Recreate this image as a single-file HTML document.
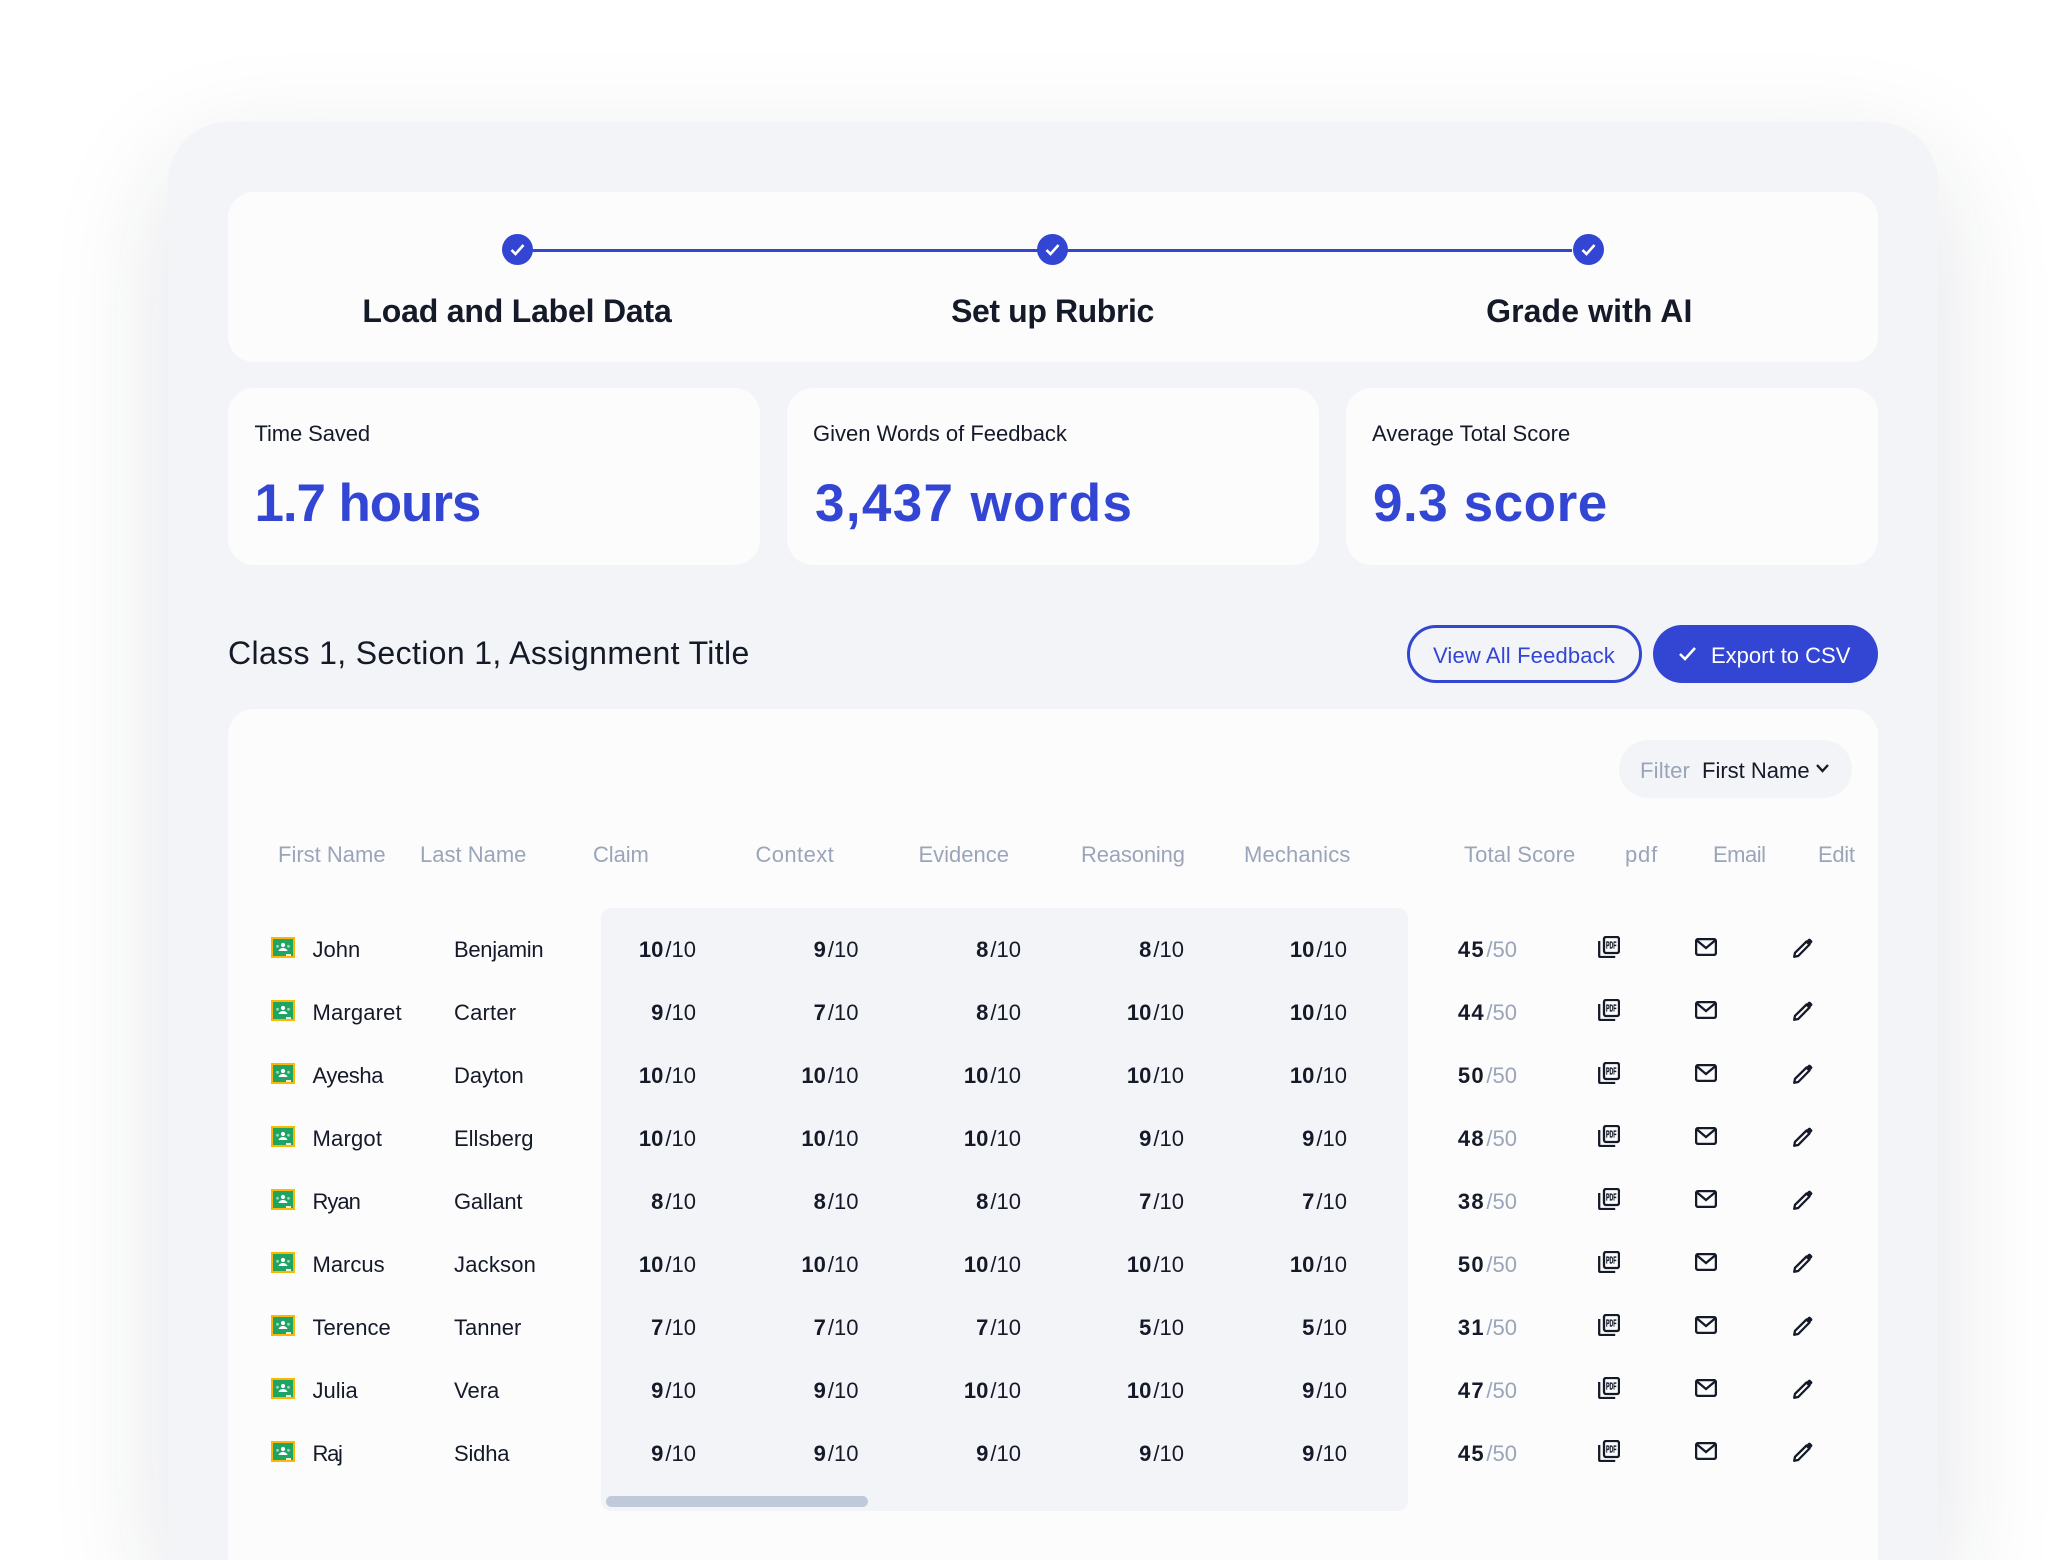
<!DOCTYPE html>
<html lang="en">
<head>
<meta charset="utf-8">
<title>Grade with AI</title>
<style>
html,body{margin:0;padding:0;background:#fff;width:2058px;height:1560px;overflow:hidden}
#page{width:2058px;height:1560px;position:relative;overflow:hidden;font-family:"Liberation Sans",sans-serif;color:#151a29;font-size:22px;background:#fff}
.abs,.panel,.card,.t,.row,.row>*{position:absolute}
.t{white-space:nowrap;line-height:30px}
.panel{left:168px;top:122px;width:1770px;height:1438px;background:#f3f4f8;border-radius:60px 60px 0 0;box-shadow:0 40px 120px rgba(30,40,70,.13)}
.card{background:#fcfcfd;border-radius:26px}
.blue{color:#3346d3}
.step{width:500px;margin-left:-250px;text-align:center;font-weight:700;font-size:32px;letter-spacing:-.2px;top:296px}
.dot{position:absolute;top:234px;width:31px;height:31px;margin-left:-15.5px}
.label{top:419px}
.val{top:473px;line-height:62px;font-size:53px;font-weight:700;letter-spacing:-1px;color:#3346d3}
.btn{position:absolute;top:624.5px;height:58px;border-radius:29px;box-sizing:border-box}
.h{top:840px;color:#9aa5b9}
.row{left:0;top:0;width:2058px;height:63px;line-height:63px}
.row>*{white-space:nowrap}
.fn{left:312.5px}
.ln{left:454px}
.s{width:120px;text-align:right}
.s b{font-weight:700;margin-right:2px}
.s1{left:576px}.s2{left:738.5px}.s3{left:901px}.s4{left:1064px}.s5{left:1227px}
.tot{left:1397px;width:120px;text-align:right}
.tot b{font-weight:700;letter-spacing:1.3px;margin-right:1.5px}
.tot span{color:#9aa5b9}
.ic{left:271px;top:19px;width:24px;height:21px}
.ip{left:1598px;top:18px;width:22px;height:22px}
.im{left:1695px;top:20px;width:22px;height:18px}
.ie{left:1793px;top:20px;width:20px;height:20px}
.ptx{font-size:10px;font-weight:700;fill:#151a29;stroke:#151a29;stroke-width:.3;font-family:"Liberation Sans",sans-serif}
</style>
</head>
<body>
<div id="page">
<svg width="0" height="0" style="position:absolute">
<defs>
<symbol id="cr" viewBox="0 0 24 21">
<rect x="1" y="1" width="22" height="19" fill="#1fa463" stroke="#fbb800" stroke-width="2"/>
<circle cx="12" cy="8" r="2.1" fill="#fff"/>
<circle cx="6.5" cy="9.3" r="1.4" fill="#9fd8ba"/>
<circle cx="17.5" cy="9.3" r="1.4" fill="#9fd8ba"/>
<path d="M7.5 14c.6-2 2.6-3 4.5-3s3.900 1 4.500 3z" fill="#fff"/>
<rect x="15" y="17" width="5" height="2" fill="#e9efe9"/>
</symbol>
<symbol id="pf" viewBox="0 0 22 22">
<rect x="6" y="1" width="15" height="16" rx="2" fill="none" stroke="#151a29" stroke-width="2.300"/>
<path d="M1.200 5v15a1 1 0 0 0 1 1h15" fill="none" stroke="#151a29" stroke-width="2.300"/>
</symbol>
<symbol id="ml" viewBox="0 0 22 18">
<rect x="1.100" y="1.100" width="19.800" height="15.800" rx="2" fill="none" stroke="#151a29" stroke-width="2.300"/>
<path d="M2 2.500l9 7.500 9-7.500" fill="none" stroke="#151a29" stroke-width="2.300"/>
</symbol>
<symbol id="pn" viewBox="0 0 20 20">
<path d="M1.200 18.800l.8-4L13.500 3.500 16.500 6.500 5.200 18z" fill="none" stroke="#151a29" stroke-width="2.300" stroke-linejoin="round"/>
<path d="M13.500 2.900l1.800-1.800a1.600 1.600 0 0 1 2.200 0l1.400 1.400a1.600 1.600 0 0 1 0 2.200L17.100 6.500z" fill="#151a29"/>
</symbol>
</defs>
</svg>

<div class="panel"></div>

<div class="card" style="left:228px;top:192px;width:1650px;height:170px"></div>
<div class="abs" style="left:532px;top:249px;width:1040px;height:3px;background:#3346d3"></div>
<svg class="dot" style="left:517px" viewBox="0 0 31 31"><circle cx="15.500" cy="15.500" r="15.500" fill="#3346d3"/><path d="M9.500 16l4 4 8-9" fill="none" stroke="#fff" stroke-width="2.600"/></svg>
<svg class="dot" style="left:1052.500px" viewBox="0 0 31 31"><circle cx="15.500" cy="15.500" r="15.500" fill="#3346d3"/><path d="M9.500 16l4 4 8-9" fill="none" stroke="#fff" stroke-width="2.600"/></svg>
<svg class="dot" style="left:1588px" viewBox="0 0 31 31"><circle cx="15.500" cy="15.500" r="15.500" fill="#3346d3"/><path d="M9.500 16l4 4 8-9" fill="none" stroke="#fff" stroke-width="2.600"/></svg>
<div class="t step" style="left:517px">Load and Label Data</div>
<div class="t step" style="left:1052.500px;letter-spacing:-.4px">Set up Rubric</div>
<div class="t step" style="left:1589.300px;letter-spacing:.1px">Grade with AI</div>

<div class="card" style="left:228px;top:388px;width:532px;height:177px"></div>
<div class="card" style="left:787px;top:388px;width:532px;height:177px"></div>
<div class="card" style="left:1346px;top:388px;width:532px;height:177px"></div>
<div class="t label" style="left:254.500px;letter-spacing:-.1px">Time Saved</div>
<div class="t label" style="left:813px">Given Words of Feedback</div>
<div class="t label" style="left:1372px;letter-spacing:.05px">Average Total Score</div>
<div class="t val" style="left:254.500px;letter-spacing:-1.1px">1.7 hours</div>
<div class="t val" style="left:815px;letter-spacing:1.350px">3,437 words</div>
<div class="t val" style="left:1373px;letter-spacing:.55px">9.3 score</div>

<div class="t" style="left:228px;top:633px;font-size:32px;line-height:40px;letter-spacing:.36px">Class 1, Section 1, Assignment Title</div>
<div class="btn" style="left:1407px;width:235px;border:3px solid #3346d3"></div>
<div class="t blue" style="left:1433px;top:641px;font-size:22px;letter-spacing:.15px">View All Feedback</div>
<div class="btn" style="left:1653px;width:225px;background:#3346d3"></div>
<svg class="abs" style="left:1678px;top:646px" width="19" height="15" viewBox="0 0 19 15"><path d="M2 8l5 5L17 2" fill="none" stroke="#fff" stroke-width="2.600"/></svg>
<div class="t" style="left:1711px;top:641px;color:#fff">Export to CSV</div>

<div class="card" style="left:228px;top:709px;width:1650px;height:851px;border-radius:26px 26px 0 0"></div>
<div class="abs" style="left:1619px;top:740px;width:233px;height:58px;border-radius:29px;background:#f3f4f8"></div>
<div class="t" style="left:1640px;top:756px;color:#9aa5b9;letter-spacing:.2px">Filter</div>
<div class="t" style="left:1702px;top:756px">First Name</div>
<svg class="abs" style="left:1815px;top:763px" width="15" height="11" viewBox="0 0 15 11"><path d="M2 2l5.500 6L13 2" fill="none" stroke="#151a29" stroke-width="2.400"/></svg>

<div class="t h" style="left:278px">First Name</div>
<div class="t h" style="left:420px">Last Name</div>
<div class="t h" style="left:593px;letter-spacing:-.1px">Claim</div>
<div class="t h" style="left:755.500px;letter-spacing:.4px">Context</div>
<div class="t h" style="left:918.500px">Evidence</div>
<div class="t h" style="left:1081px;letter-spacing:-.15px">Reasoning</div>
<div class="t h" style="left:1244px;letter-spacing:.15px">Mechanics</div>
<div class="t h" style="left:1464px;letter-spacing:.12px">Total Score</div>
<div class="t h" style="left:1625px;letter-spacing:.8px">pdf</div>
<div class="t h" style="left:1713px;letter-spacing:-.5px">Email</div>
<div class="t h" style="left:1818px;letter-spacing:-.3px">Edit</div>

<div class="abs" style="left:601px;top:908px;width:807px;height:603px;background:#f3f4f8;border-radius:10px"></div>
<div class="abs" style="left:606px;top:1496px;width:262px;height:11px;background:#bfc9da;border-radius:6px"></div>

<div class="row" style="top:918px"><svg class="ic"><use href="#cr"/></svg><span class="fn">John</span><span class="ln" style="letter-spacing:-.3px">Benjamin</span><span class="s s1"><b>10</b>/10</span><span class="s s2"><b>9</b>/10</span><span class="s s3"><b>8</b>/10</span><span class="s s4"><b>8</b>/10</span><span class="s s5"><b>10</b>/10</span><span class="tot"><b>45</b><span>/50</span></span><svg class="ip" viewBox="0 0 22 22"><use href="#pf"/><text class="ptx" x="8" y="12.500" textLength="10.500" lengthAdjust="spacingAndGlyphs">PDF</text></svg><svg class="im"><use href="#ml"/></svg><svg class="ie"><use href="#pn"/></svg></div>
<div class="row" style="top:981px"><svg class="ic"><use href="#cr"/></svg><span class="fn" style="letter-spacing:.15px">Margaret</span><span class="ln" style="letter-spacing:.2px">Carter</span><span class="s s1"><b>9</b>/10</span><span class="s s2"><b>7</b>/10</span><span class="s s3"><b>8</b>/10</span><span class="s s4"><b>10</b>/10</span><span class="s s5"><b>10</b>/10</span><span class="tot"><b>44</b><span>/50</span></span><svg class="ip" viewBox="0 0 22 22"><use href="#pf"/><text class="ptx" x="8" y="12.500" textLength="10.500" lengthAdjust="spacingAndGlyphs">PDF</text></svg><svg class="im"><use href="#ml"/></svg><svg class="ie"><use href="#pn"/></svg></div>
<div class="row" style="top:1044px"><svg class="ic"><use href="#cr"/></svg><span class="fn" style="letter-spacing:-.4px">Ayesha</span><span class="ln">Dayton</span><span class="s s1"><b>10</b>/10</span><span class="s s2"><b>10</b>/10</span><span class="s s3"><b>10</b>/10</span><span class="s s4"><b>10</b>/10</span><span class="s s5"><b>10</b>/10</span><span class="tot"><b>50</b><span>/50</span></span><svg class="ip" viewBox="0 0 22 22"><use href="#pf"/><text class="ptx" x="8" y="12.500" textLength="10.500" lengthAdjust="spacingAndGlyphs">PDF</text></svg><svg class="im"><use href="#ml"/></svg><svg class="ie"><use href="#pn"/></svg></div>
<div class="row" style="top:1107px"><svg class="ic"><use href="#cr"/></svg><span class="fn" style="letter-spacing:.2px">Margot</span><span class="ln">Ellsberg</span><span class="s s1"><b>10</b>/10</span><span class="s s2"><b>10</b>/10</span><span class="s s3"><b>10</b>/10</span><span class="s s4"><b>9</b>/10</span><span class="s s5"><b>9</b>/10</span><span class="tot"><b>48</b><span>/50</span></span><svg class="ip" viewBox="0 0 22 22"><use href="#pf"/><text class="ptx" x="8" y="12.500" textLength="10.500" lengthAdjust="spacingAndGlyphs">PDF</text></svg><svg class="im"><use href="#ml"/></svg><svg class="ie"><use href="#pn"/></svg></div>
<div class="row" style="top:1170px"><svg class="ic"><use href="#cr"/></svg><span class="fn" style="letter-spacing:-1px">Ryan</span><span class="ln" style="letter-spacing:-.2px">Gallant</span><span class="s s1"><b>8</b>/10</span><span class="s s2"><b>8</b>/10</span><span class="s s3"><b>8</b>/10</span><span class="s s4"><b>7</b>/10</span><span class="s s5"><b>7</b>/10</span><span class="tot"><b>38</b><span>/50</span></span><svg class="ip" viewBox="0 0 22 22"><use href="#pf"/><text class="ptx" x="8" y="12.500" textLength="10.500" lengthAdjust="spacingAndGlyphs">PDF</text></svg><svg class="im"><use href="#ml"/></svg><svg class="ie"><use href="#pn"/></svg></div>
<div class="row" style="top:1233px"><svg class="ic"><use href="#cr"/></svg><span class="fn">Marcus</span><span class="ln" style="letter-spacing:.2px">Jackson</span><span class="s s1"><b>10</b>/10</span><span class="s s2"><b>10</b>/10</span><span class="s s3"><b>10</b>/10</span><span class="s s4"><b>10</b>/10</span><span class="s s5"><b>10</b>/10</span><span class="tot"><b>50</b><span>/50</span></span><svg class="ip" viewBox="0 0 22 22"><use href="#pf"/><text class="ptx" x="8" y="12.500" textLength="10.500" lengthAdjust="spacingAndGlyphs">PDF</text></svg><svg class="im"><use href="#ml"/></svg><svg class="ie"><use href="#pn"/></svg></div>
<div class="row" style="top:1296px"><svg class="ic"><use href="#cr"/></svg><span class="fn">Terence</span><span class="ln">Tanner</span><span class="s s1"><b>7</b>/10</span><span class="s s2"><b>7</b>/10</span><span class="s s3"><b>7</b>/10</span><span class="s s4"><b>5</b>/10</span><span class="s s5"><b>5</b>/10</span><span class="tot"><b>31</b><span>/50</span></span><svg class="ip" viewBox="0 0 22 22"><use href="#pf"/><text class="ptx" x="8" y="12.500" textLength="10.500" lengthAdjust="spacingAndGlyphs">PDF</text></svg><svg class="im"><use href="#ml"/></svg><svg class="ie"><use href="#pn"/></svg></div>
<div class="row" style="top:1359px"><svg class="ic"><use href="#cr"/></svg><span class="fn">Julia</span><span class="ln">Vera</span><span class="s s1"><b>9</b>/10</span><span class="s s2"><b>9</b>/10</span><span class="s s3"><b>10</b>/10</span><span class="s s4"><b>10</b>/10</span><span class="s s5"><b>9</b>/10</span><span class="tot"><b>47</b><span>/50</span></span><svg class="ip" viewBox="0 0 22 22"><use href="#pf"/><text class="ptx" x="8" y="12.500" textLength="10.500" lengthAdjust="spacingAndGlyphs">PDF</text></svg><svg class="im"><use href="#ml"/></svg><svg class="ie"><use href="#pn"/></svg></div>
<div class="row" style="top:1422px"><svg class="ic"><use href="#cr"/></svg><span class="fn" style="letter-spacing:-1.300px">Raj</span><span class="ln" style="letter-spacing:-.2px">Sidha</span><span class="s s1"><b>9</b>/10</span><span class="s s2"><b>9</b>/10</span><span class="s s3"><b>9</b>/10</span><span class="s s4"><b>9</b>/10</span><span class="s s5"><b>9</b>/10</span><span class="tot"><b>45</b><span>/50</span></span><svg class="ip" viewBox="0 0 22 22"><use href="#pf"/><text class="ptx" x="8" y="12.500" textLength="10.500" lengthAdjust="spacingAndGlyphs">PDF</text></svg><svg class="im"><use href="#ml"/></svg><svg class="ie"><use href="#pn"/></svg></div>
</div>
</body>
</html>
